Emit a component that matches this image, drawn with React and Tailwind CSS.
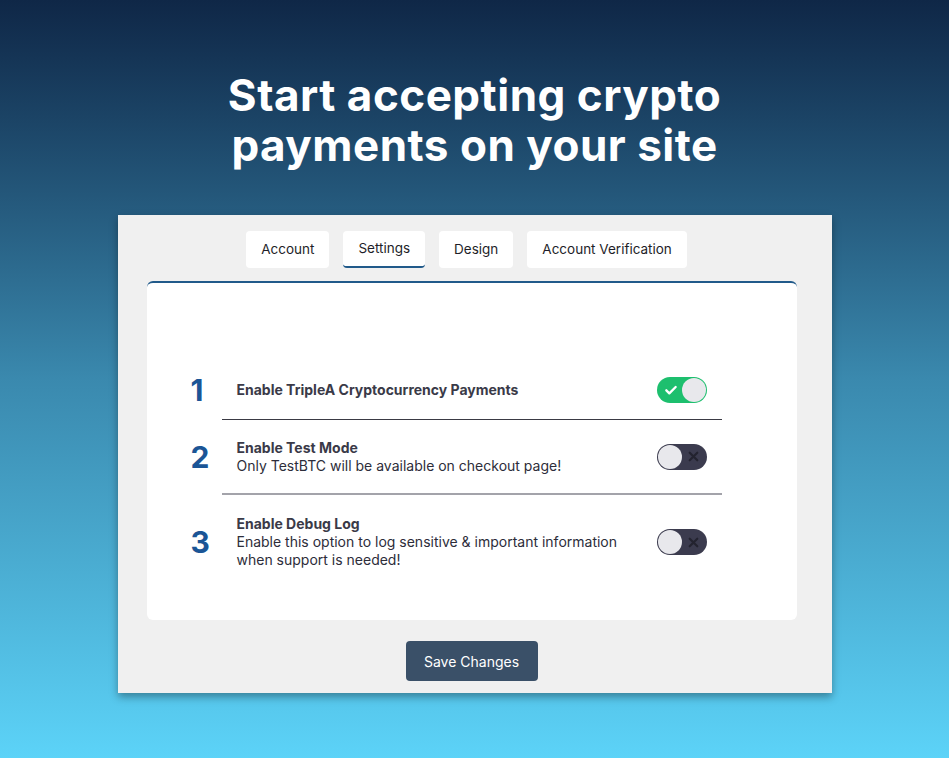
import React from 'react';

const tabs = ['Account', 'Settings', 'Design', 'Account Verification'];

const Toggle = ({ on }) =>
  on ? (
    <div className="w-[50px] h-[26px] rounded-full bg-[#1dbf6e] flex items-center justify-between pl-[6px] pr-[1px]">
      <svg width="16" height="16" viewBox="0 0 24 24" fill="none" stroke="white" strokeWidth="3.5" strokeLinecap="round" strokeLinejoin="round">
        <path d="M5 12.5l4.5 4.5L19 7.5" />
      </svg>
      <div className="w-[24px] h-[24px] rounded-full bg-[#e8e8ec]" />
    </div>
  ) : (
    <div className="w-[50px] h-[26px] rounded-full bg-[#3b3b4e] flex items-center justify-between pl-[1px] pr-[7px]">
      <div className="w-[24px] h-[24px] rounded-full bg-[#e8e8ec]" />
      <svg width="13" height="13" viewBox="0 0 24 24" fill="none" stroke="#23232f" strokeWidth="4" strokeLinecap="round">
        <path d="M5 5l14 14M19 5L5 19" />
      </svg>
    </div>
  );

const Row = ({ num, title, desc, on, h }) => (
  <div className={`w-[531px] flex items-center ${h}`}>
    <div className="w-[46px] text-[30px] font-bold text-[#1b5596] leading-none">{num}</div>
    <div className="flex-1 text-[14px] text-[#2d2d3a] leading-[18px]">
      <div className="font-bold text-[#3a3a48]">{title}</div>
      {desc && <div className="w-[400px]">{desc}</div>}
    </div>
    <div className="mr-[15px]">
      <Toggle on={on} />
    </div>
  </div>
);

export default function App() {
  return (
    <div
      className="h-[758px] w-full flex flex-col items-center bg-gradient-to-b from-[#0f2747] via-[#3a89ae] to-[#5cd3f8]"
      style={{ fontFamily: 'Inter, "Noto Sans", sans-serif' }}
    >
      <h1 className="mt-[70px] text-center text-white font-bold text-[44px] leading-[50px] tracking-[0.5px]">
        Start accepting crypto
        <br />
        payments on your site
      </h1>

      <div className="mt-[45px] w-[714px] bg-[#f0f0f0] shadow-[0_4px_8px_rgba(0,0,0,0.35)] pl-[29px] pr-[35px] pt-[16px] pb-[12px] flex flex-col items-center">
        <div className="flex gap-[14px] mr-[10px]">
          {tabs.map((t) => (
            <div
              key={t}
              className={`h-[37px] px-[15px] flex items-center bg-white rounded-[4px] text-[13.5px] text-[#1e1e28] ${
                t === 'Settings' ? 'border-b-2 border-[#215a8a]' : ''
              }`}
            >
              {t}
            </div>
          ))}
        </div>

        <div className="mt-[13px] w-full bg-white rounded-[6px] border-t-2 border-[#215a8a] pl-[44px] pt-[78px] pb-[31px]">
          <Row num="1" title="Enable TripleA Cryptocurrency Payments" on h="h-[58px]" />
          <div className="ml-[31px] w-[500px] h-px bg-[#3a3a44]" />
          <Row
            num="2"
            title="Enable Test Mode"
            desc="Only TestBTC will be available on checkout page!"
            h="h-[73px]"
          />
          <div className="ml-[31px] w-[500px] h-[2px] bg-[#a3a3aa]" />
          <Row
            num="3"
            title="Enable Debug Log"
            desc="Enable this option to log sensitive & important information when support is needed!"
            h="h-[94px]"
          />
        </div>

        <button className="mt-[21px] w-[132px] h-[40px] rounded-[4px] bg-[#3a5068] text-white text-[14px]">
          Save Changes
        </button>
      </div>
    </div>
  );
}
